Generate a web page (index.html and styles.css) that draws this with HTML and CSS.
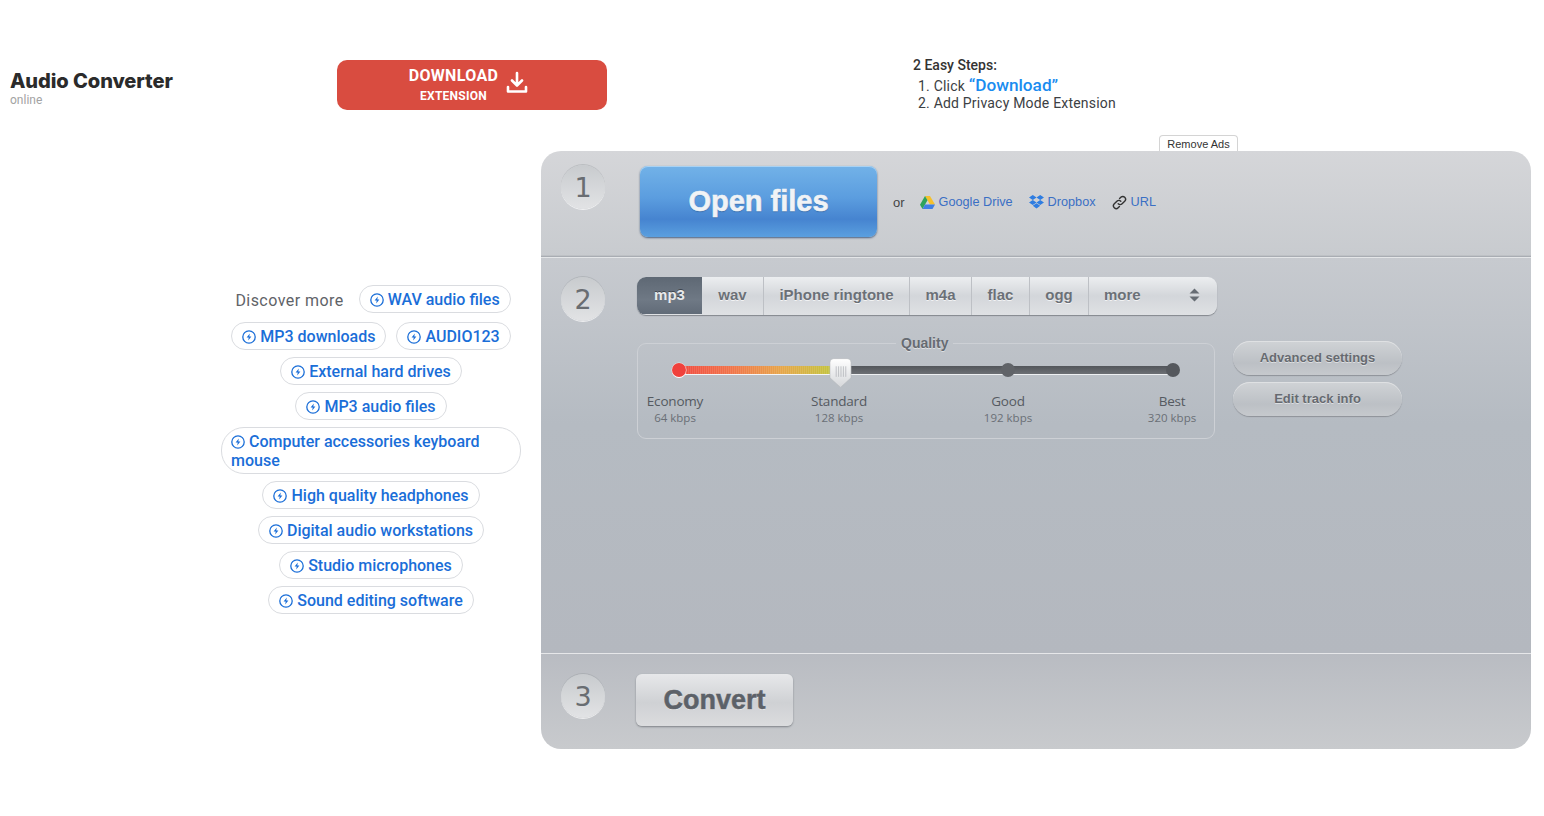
FILE: index.html
```html
<!DOCTYPE html>
<html lang="en">
<head>
<meta charset="utf-8">
<title>Audio Converter</title>
<link rel="stylesheet" href="styles.css">
</head>
<body>
<svg class="defs" width="0" height="0" aria-hidden="true">
  <symbol id="bolt" viewBox="0 0 14 14">
    <circle cx="7" cy="7" r="6.2" fill="none" stroke="currentColor" stroke-width="1.3"/>
    <path d="M7.8 3.4 4.6 7.6h2.1l-.5 3 3.2-4.2H7.3z" fill="currentColor"/>
  </symbol>
</svg>
<header class="top">
  <div class="logo">
    <div class="logo-name">Audio Converter</div>
    <div class="logo-sub">online</div>
  </div>
  <a class="dl-btn">
    <span class="dl-text"><span class="dl-main">DOWNLOAD</span><span class="dl-sub">EXTENSION</span></span>
    <svg class="dl-icon" width="22" height="24" viewBox="0 0 22 24"><path d="M11 2v12M6 9.5l5 5 5-5M2 16v4.5h18V16" fill="none" stroke="#fff" stroke-width="2.6" stroke-linecap="round" stroke-linejoin="round"/></svg>
  </a>
  <div class="steps">
    <div class="steps-title">2 Easy Steps:</div>
    <div class="steps-line">1. Click <span class="steps-link">“Download”</span></div>
    <div class="steps-line">2. Add Privacy Mode Extension</div>
  </div>
</header>
<main class="layout">
  <aside class="discover">
    <span class="discover-label">Discover more</span>
    <a class="chip"><svg class="chip-icon"><use href="#bolt"/></svg>WAV audio files</a>
    <a class="chip"><svg class="chip-icon"><use href="#bolt"/></svg>MP3 downloads</a>
    <a class="chip"><svg class="chip-icon"><use href="#bolt"/></svg>AUDIO123</a>
    <a class="chip"><svg class="chip-icon"><use href="#bolt"/></svg>External hard drives</a>
    <a class="chip"><svg class="chip-icon"><use href="#bolt"/></svg>MP3 audio files</a>
    <a class="chip chip-wide"><svg class="chip-icon"><use href="#bolt"/></svg>Computer accessories keyboard mouse</a>
    <a class="chip"><svg class="chip-icon"><use href="#bolt"/></svg>High quality headphones</a>
    <a class="chip"><svg class="chip-icon"><use href="#bolt"/></svg>Digital audio workstations</a>
    <a class="chip"><svg class="chip-icon"><use href="#bolt"/></svg>Studio microphones</a>
    <a class="chip"><svg class="chip-icon"><use href="#bolt"/></svg>Sound editing software</a>
  </aside>
  <div class="app">
    <div class="remove-row"><a class="remove-ads">Remove Ads</a></div>
    <div class="panel">
      <section class="sec sec-1">
        <div class="num">1</div>
        <button class="open-btn">Open files</button>
        <div class="sources">
          <span class="or">or</span>
          <a class="source">
            <svg width="15" height="13" viewBox="0 0 15 13"><path d="M5 0h5l5 8.500h-5z" fill="#f5c02c"/><path d="M5 0 0 8.700 2.500 13 7.500 4.300z" fill="#2da35a"/><path d="M2.500 13h10L15 8.500H5z" fill="#3f7fe4"/></svg>
            Google Drive
          </a>
          <a class="source">
            <svg width="15" height="14" viewBox="0 0 15 14"><path d="M3.800 0 0 2.500l3.800 2.500 3.700-2.500zM11.200 0 7.500 2.500 11.200 5 15 2.500zM0 7.500 3.800 10l3.700-2.500L3.800 5zM11.200 5 7.500 7.500l3.700 2.500L15 7.500zM3.800 10.800 7.500 13.500l3.700-2.700-3.700-2.500z" fill="#2f7de1"/></svg>
            Dropbox
          </a>
          <a class="source">
            <svg width="15" height="15" viewBox="0 0 15 15"><path d="M6.200 8.800a2.700 2.700 0 0 0 3.900 0l2.600-2.600a2.750 2.750 0 0 0-3.900-3.900L7.600 3.500M8.800 6.200a2.700 2.700 0 0 0-3.900 0L2.300 8.800a2.750 2.750 0 0 0 3.900 3.900l1.200-1.200" fill="none" stroke="#333" stroke-width="1.400" stroke-linecap="round"/></svg>
            URL
          </a>
        </div>
      </section>
      <section class="sec sec-2">
        <div class="num">2</div>
        <div class="sec-2-body">
          <div class="tabs">
            <a class="tab tab-on">mp3</a>
            <a class="tab">wav</a>
            <a class="tab">iPhone ringtone</a>
            <a class="tab">m4a</a>
            <a class="tab">flac</a>
            <a class="tab">ogg</a>
            <a class="tab tab-more">more
              <svg width="11" height="14" viewBox="0 0 11 14"><path d="M5.500 0.500 10.500 5.500H.5zM5.500 13.500 .5 8.500h10z" fill="#666c73"/></svg>
            </a>
          </div>
          <div class="settings">
            <fieldset class="quality">
              <legend class="quality-title">Quality</legend>
              <div class="slider">
                <div class="track"></div>
                <div class="track-fill"></div>
                <span class="dot dot-a"></span>
                <span class="dot dot-b"></span>
                <span class="dot dot-c"></span>
                <svg class="handle" width="23" height="32" viewBox="0 0 24 32">
                  <defs><linearGradient id="hg" x1="0" y1="0" x2="0" y2="1"><stop offset="0" stop-color="#fff"/><stop offset="1" stop-color="#d5d7da"/></linearGradient></defs>
                  <path d="M5 1h14q4 0 4 4v16l-11 10L1 21V5q0-4 4-4z" fill="url(#hg)" stroke="#b4b7bb" stroke-width=".6"/>
                  <path d="M7.500 9v11M10 9v11M12.500 9v11M15 9v11M17.500 9v11" stroke="#b0b3b8" stroke-width=".8"/>
                </svg>
              </div>
              <div class="levels">
                <div class="level"><span class="level-name">Economy</span><span class="level-rate">64 kbps</span></div>
                <div class="level"><span class="level-name">Standard</span><span class="level-rate">128 kbps</span></div>
                <div class="level"><span class="level-name">Good</span><span class="level-rate">192 kbps</span></div>
                <div class="level"><span class="level-name">Best</span><span class="level-rate">320 kbps</span></div>
              </div>
            </fieldset>
            <div class="side-btns">
              <button class="pill">Advanced settings</button>
              <button class="pill">Edit track info</button>
            </div>
          </div>
        </div>
      </section>
      <section class="sec sec-3">
        <div class="num">3</div>
        <button class="convert">Convert</button>
      </section>
    </div>
  </div>
</main>
</body>
</html>
```
FILE: styles.css
```css
* { box-sizing: border-box; }
html, body { margin: 0; padding: 0; background: #fff; }
body { font-family: "Roboto", "Liberation Sans", sans-serif; color: #333; height: 816px; overflow: hidden; }
.defs { position: absolute; }

.top { display: flex; align-items: flex-start; height: 135px; padding: 57px 0 0 10px; }
.logo { width: 327px; padding-top: 12px; }
.logo-name { font-family: "Inter", sans-serif; font-size: 20.1px; line-height: 24px; font-weight: 800; color: #2b2b2b; letter-spacing: -0.1px; }
.logo-sub { font-size: 12px; line-height: 14px; color: #a3a3a3; }

.dl-btn { width: 270px; height: 50px; margin-top: 3px; background: #d94c40; border-radius: 10px; display: flex; align-items: center; justify-content: center; gap: 8px; color: #fff; padding-right: 7px; }
.dl-text { display: flex; flex-direction: column; align-items: center; font-weight: 700; }
.dl-main { font-size: 16px; line-height: 20px; letter-spacing: 0.35px; }
.dl-sub { font-size: 12px; line-height: 16px; letter-spacing: 0.25px; margin-top: 2px; }
.dl-icon { margin-top: -5px; }

.steps { margin-left: 306px; font-size: 14px; color: #3c4043; }
.steps-title { font-weight: 500; line-height: 17px; color: #333; }
.steps-line { padding-left: 5px; line-height: 14px; letter-spacing: 0.2px; }
.steps-line:nth-child(2) { line-height: 19px; margin-top: 2px; }
.steps-link { color: #1a8cf0; font-size: 17.2px; font-weight: 500; letter-spacing: 0; }

.layout { display: flex; align-items: flex-start; }

.discover { width: 300px; margin: 150px 20px 0 221px; display: flex; flex-wrap: wrap; justify-content: center; align-items: flex-start; gap: 7px 10px; }
.discover-label { font-size: 16px; line-height: 18px; padding: 7px 5px 5px 0; height: 30px; color: #5f6368; letter-spacing: 0.45px; margin-left: 4px; }
.chip { display: inline-block; height: 28px; border: 1px solid #dadce0; border-radius: 14px; padding: 0 10px; font-size: 16px; line-height: 28px; font-weight: 500; color: #1a6ed8; white-space: nowrap; }
.chip-wide { width: 300px; height: 47px; white-space: normal; border-radius: 23px; padding: 4px 9px 0; line-height: 19px; }
.chip-icon { width: 14px; height: 14px; margin: 0 4px 0 0; vertical-align: -2px; }

.app { width: 990px; }
.remove-row { display: flex; justify-content: flex-end; padding-right: 293px; height: 16px; }
.remove-ads { width: 79px; height: 16px; border: 1px solid #d4d4d4; border-bottom: 0; border-radius: 4px 4px 0 0; background: #fff; font-family: "Liberation Sans", sans-serif; font-size: 11px; line-height: 17px; text-align: center; color: #333; }

.panel { width: 990px; height: 598px; border-radius: 20px; overflow: hidden; font-family: "Liberation Sans", sans-serif; display: flex; flex-direction: column; }
.sec { display: flex; padding-left: 20px; }
.num { width: 44px; height: 44px; flex: none; border-radius: 50%; background: linear-gradient(#c8cbce, #e2e3e5); box-shadow: 0 -1px 0 rgba(140,145,150,.35), 0 1px 0 rgba(255,255,255,.7); font-family: "DejaVu Sans", sans-serif; font-size: 27px; line-height: 46px; text-align: center; color: #696d72; }

.sec-1 { height: 106px; padding-top: 14px; align-items: flex-start; background: linear-gradient(#d5d6d9, #c8cbcf); border-bottom: 1px solid #a9adb3; box-shadow: inset 0 -1px 0 #bec1c5; }
.open-btn { width: 237px; height: 71px; margin: 1px 0 0 35px; border: 0; border-radius: 8px; background: linear-gradient(#72b2e8 0%, #5b9ddf 45%, #4684d0 75%, #5a9fdf 100%); box-shadow: 0 1px 2px rgba(40,70,110,.8), inset 0 1px 0 #a9d2f3; font-family: "Liberation Sans", sans-serif; font-size: 29px; font-weight: 700; color: #f0f3f6; -webkit-text-stroke: 0.6px #f0f3f6; text-shadow: 0 1px 1px rgba(40,80,130,.6); padding: 0; }
.sources { display: flex; align-items: center; height: 72px; padding-top: 2px; margin-left: 16px; font-size: 12.7px; color: #3a6fc4; }
.or { color: #444; font-size: 13px; margin-right: 15px; }
.source { display: flex; align-items: center; gap: 4px; margin-right: 16px; }

.sec-2 { height: 397px; padding-top: 19px; align-items: flex-start; border-top: 1px solid #e4e6e8; background: linear-gradient(#c7cacf 0%, #b5bbc2 42%, #b4b8bf 100%); border-bottom: 1px solid #e6e7e9; }
.sec-2-body { margin-left: 32px; }
.tabs { width: 580px; height: 38px; display: flex; border-radius: 9px; overflow: hidden; background: linear-gradient(#eceef0, #d3d6da 50%, #dfe1e4); box-shadow: 0 1px 1px #83878d; font-size: 15px; font-weight: 700; color: #6b7077; }
.tab { display: flex; align-items: center; justify-content: center; padding: 0 15px 3px; border-left: 1px solid #bdc0c5; text-shadow: 0 1px 0 rgba(255,255,255,.7); }
.tab-on { width: 65px; padding: 0 0 3px; border-left: 0; background: linear-gradient(#5e6874, #6f7985 60%, #606a77); color: #e8eaec; text-shadow: 0 -1px 0 rgba(0,0,0,.4); box-shadow: inset 0 -1px 0 #dfe1e4; }
.tab:nth-child(2) { width: 61px; padding: 0 0 3px; border-left: 0; }
.tab:nth-child(3) { width: 146px; padding: 0 0 3px; }
.tab:nth-child(4) { width: 62px; padding: 0 0 3px; }
.tab:nth-child(5) { width: 58px; padding: 0 0 3px; }
.tab:nth-child(6) { width: 59px; padding: 0 0 3px; }
.tab-more { flex: 1; justify-content: space-between; padding: 0 17px 3px 15px; }

.settings { display: flex; align-items: flex-start; margin-top: 20px; }
.quality { width: 578px; height: 104px; margin: 0; padding: 0 0 0 7px; border: 1px solid #cdd0d5; border-radius: 9px; min-inline-size: 0; }
.quality-title { padding: 0 5px; font-size: 14px; line-height: 17px; font-weight: 700; color: #666b72; margin-left: 251px; text-shadow: 0 1px 0 rgba(255,255,255,.5); }
.slider { position: relative; height: 30px; margin-top: 11px; }
.track { position: absolute; left: 34px; top: 3px; width: 494px; height: 8px; border-radius: 4px; background: linear-gradient(#53565b, #6c6f74); box-shadow: 0 1px 0 #eef0f2; }
.track-fill { position: absolute; left: 27px; top: 3px; width: 169px; height: 8px; border-radius: 4px 0 0 4px; background: repeating-linear-gradient(90deg, rgba(255,255,255,.1) 0 1px, transparent 1px 2px), linear-gradient(90deg, #f0453f 0%, #f1744a 35%, #e6a64a 65%, #bcc93c 100%); box-shadow: 0 1px 0 #f4f5f6; }
.dot { position: absolute; top: 0; width: 14px; height: 14px; border-radius: 50%; }
.dot-a { left: 27px; background: #f0413c; box-shadow: 0 1px 0 #fff, 0 0 0 .5px #e9e9e9; }
.dot-b { left: 356px; background: #606368; }
.dot-c { left: 521px; background: #55585d; }
.handle { position: absolute; left: 184px; top: -6px; }
.levels { display: grid; grid-template-columns: 164px 169px 164px 60px; }
.level { width: 60px; display: flex; flex-direction: column; align-items: center; white-space: nowrap; font-family: "Open Sans", sans-serif; color: #555a61; }
.level-name { font-size: 13.5px; line-height: 17px; letter-spacing: -0.2px; }
.level-rate { font-size: 11.5px; line-height: 15px; color: #6a6f76; }

.side-btns { display: flex; flex-direction: column; gap: 7px; margin: 6px 0 0 18px; }
.pill { width: 169px; height: 34px; border: 0; border-radius: 17px; background: linear-gradient(#d0d3d6, #bcc0c5 65%, #c6c9cd); box-shadow: 0 1px 1px #8e9298, inset 0 1px 0 #dfe1e3; font-family: "Liberation Sans", sans-serif; font-size: 13px; font-weight: 700; color: #666a70; text-shadow: 0 1px 0 rgba(255,255,255,.5); padding: 0 0 2px; }

.sec-3 { height: 95px; padding-top: 20px; align-items: flex-start; background: linear-gradient(#b9bcc2, #c8cacd); }
.convert { width: 157px; height: 52px; margin: 0 0 0 31px; border: 0; border-radius: 6px; background: linear-gradient(#e7e8ea, #cfd1d4 55%, #dbdcde); box-shadow: 0 1px 2px #7f8388; font-family: "Liberation Sans", sans-serif; font-size: 27px; font-weight: 700; color: #5c6168; -webkit-text-stroke: 0.5px #5c6168; text-shadow: 0 1px 0 rgba(255,255,255,.6); padding: 0; }
```
